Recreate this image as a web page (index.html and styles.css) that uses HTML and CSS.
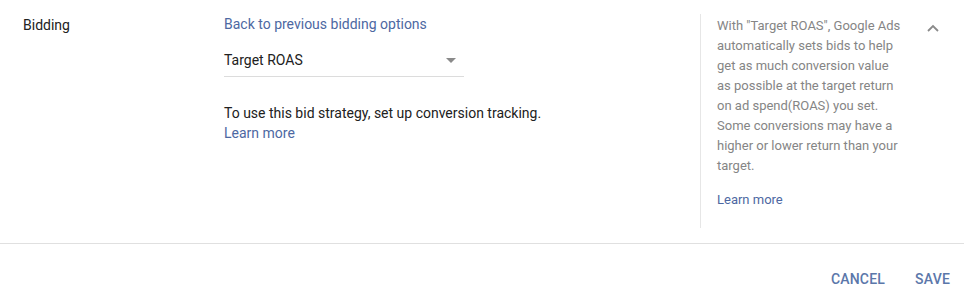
FILE: index.html
```html
<!DOCTYPE html>
<html>
<head>
<meta charset="utf-8">
<link rel="stylesheet" href="styles.css">
</head>
<body>
<div class="panel">
  <div class="content">
    <div class="label">Bidding</div>
    <div class="main">
      <a class="link back">Back to previous bidding options</a>
      <div class="select">
        <span>Target ROAS</span>
        <span class="arrow"></span>
      </div>
      <p class="note">To use this bid strategy, set up conversion tracking.<br><a class="link">Learn more</a></p>
    </div>
    <div class="help">
      <p class="help-text">With "Target ROAS", Google Ads automatically sets bids to help get as much conversion value as possible at the target return on ad spend(ROAS) you set. Some conversions may have a higher or lower return than your target.</p>
      <a class="link help-link">Learn more</a>
    </div>
    <div class="toggle">
      <svg width="14" height="10" viewBox="0 0 14 10"><path d="M2 8 L7 3 L12 8" fill="none" stroke="#8a8a8a" stroke-width="1.8"/></svg>
    </div>
  </div>
  <div class="actions">
    <button class="btn">CANCEL</button>
    <button class="btn">SAVE</button>
  </div>
</div>
</body>
</html>
```
FILE: styles.css
```css
html, body {
  margin: 0;
  padding: 0;
  background: #fff;
}
body {
  font-family: Roboto, "Noto Sans", Arial, sans-serif;
  color: #212121;
  width: 964px;
  height: 308px;
  overflow: hidden;
}
.panel {
  display: flex;
  flex-direction: column;
}
.content {
  display: flex;
  height: 243px;
  border-bottom: 1px solid #e0e0e0;
  box-sizing: content-box;
}
.label {
  width: 201px;
  padding-left: 23px;
  padding-top: 15px;
  font-size: 14px;
  line-height: 20px;
}
.main {
  width: 240px;
  padding-top: 14px;
  display: flex;
  flex-direction: column;
}
.link {
  color: #4d68a2;
  font-size: 14px;
  line-height: 20px;
  text-decoration: none;
}
.select {
  margin-top: 10px;
  height: 32px;
  display: flex;
  align-items: center;
  justify-content: space-between;
  border-bottom: 1px solid #dcdcdc;
  font-size: 14px;
}
.arrow {
  width: 0;
  height: 0;
  border-left: 5px solid transparent;
  border-right: 5px solid transparent;
  border-top: 5px solid #8a8a8a;
  margin-right: 8px;
}
.note {
  margin: 26px 0 0;
  font-size: 14px;
  line-height: 20px;
  width: 340px;
}
.help {
  margin-left: 236px;
  margin-top: 14px;
  padding-top: 2px;
  height: 212px;
  border-left: 1px solid #e6e6e6;
  padding-left: 16px;
  width: 186px;
  box-sizing: content-box;
}
.help-text {
  margin: 0;
  font-size: 13px;
  line-height: 20px;
  color: #858585;
}
.help-link {
  display: block;
  margin-top: 14px;
  font-size: 13px;
}
.toggle {
  padding-top: 18px;
  padding-left: 23px;
}
.actions {
  display: flex;
  justify-content: flex-end;
  gap: 14px;
  padding: 17px 6px 0 0;
}
.btn {
  background: none;
  border: none;
  font-family: Roboto, "Noto Sans", Arial, sans-serif;
  font-size: 14px;
  font-weight: 500;
  color: #5b77aa;
  letter-spacing: 0.2px;
  padding: 8px 8px;
  line-height: 20px;
}
```
